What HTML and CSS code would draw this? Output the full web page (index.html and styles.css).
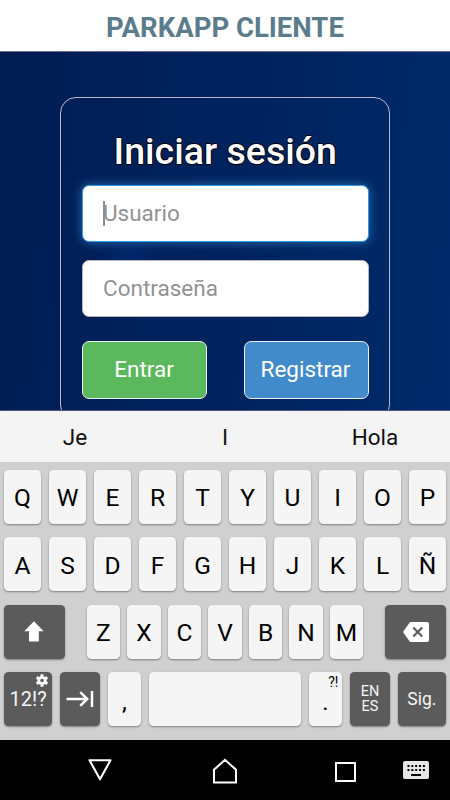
FILE: index.html
```
<!DOCTYPE html>
<html lang="es">
<head>
    <meta charset="UTF-8">
    <meta name="viewport" content="width=device-width, initial-scale=1.0">
    <title>ParkApp Cliente</title>
    <link rel="stylesheet" href="styles.css">
</head>
<body>
<header class="header">PARKAPP CLIENTE</header>

<main class="content">
    <form class="login">
        <h1>Iniciar sesión</h1>
        <div class="field focus"><span class="caret"></span>Usuario</div>
        <div class="field">Contraseña</div>
        <div class="buttons">
            <button type="button" class="btn btn-success">Entrar</button>
            <button type="button" class="btn btn-primary">Registrar</button>
        </div>
    </form>
</main>

<div class="suggestions">
    <span>Je</span>
    <span>I</span>
    <span>Hola</span>
</div>

<div class="keyboard">
    <div class="row">
        <div class="key">Q</div>
        <div class="key">W</div>
        <div class="key">E</div>
        <div class="key">R</div>
        <div class="key">T</div>
        <div class="key">Y</div>
        <div class="key">U</div>
        <div class="key">I</div>
        <div class="key">O</div>
        <div class="key">P</div>
    </div>
    <div class="row">
        <div class="key">A</div>
        <div class="key">S</div>
        <div class="key">D</div>
        <div class="key">F</div>
        <div class="key">G</div>
        <div class="key">H</div>
        <div class="key">J</div>
        <div class="key">K</div>
        <div class="key">L</div>
        <div class="key">Ñ</div>
    </div>
    <div class="row row-shift">
        <div class="key dark wide">
            <svg width="20" height="21" viewBox="0 0 20 21"><path d="M10 0.3 L19.6 10.3 H14.8 V20.5 H5 V10.3 H0.2 Z" fill="#fff"/></svg>
        </div>
        <div class="letters">
            <div class="key">Z</div>
            <div class="key">X</div>
            <div class="key">C</div>
            <div class="key">V</div>
            <div class="key">B</div>
            <div class="key">N</div>
            <div class="key">M</div>
        </div>
        <div class="key dark wide">
            <svg width="26" height="20" viewBox="0 0 26 20"><path d="M8.2 0 H24 Q26 0 26 2 V18 Q26 20 24 20 H8.2 Q7 20 6.3 19 L0.5 10.7 Q0 10 0.5 9.3 L6.3 1 Q7 0 8.2 0 Z" fill="#fff"/><path d="M10.2 5.5 L19.2 14.5 M19.2 5.5 L10.2 14.5" stroke="#5b5b5b" stroke-width="2.2"/></svg>
        </div>
    </div>
    <div class="row">
        <div class="key dark symbols">12!?
            <svg class="gear" width="12" height="13" viewBox="0 0 12 13"><circle cx="6" cy="6.5" r="3.2" fill="none" stroke="#fff" stroke-width="2.8"/><path d="M6 0.3 V2.5 M6 10.5 V12.7 M0.7 3.4 L2.5 4.5 M9.5 8.5 L11.3 9.6 M11.3 3.4 L9.5 4.5 M2.5 8.5 L0.7 9.6" stroke="#fff" stroke-width="3"/></svg>
        </div>
        <div class="key dark tab">
            <svg width="28" height="16" viewBox="0 0 28 16"><path d="M0.5 8 H21 M14.3 1.2 L21.2 8 L14.3 14.8 M26 0 V16" fill="none" stroke="#fff" stroke-width="2.5"/></svg>
        </div>
        <div class="key punct">,</div>
        <div class="key space"></div>
        <div class="key punct">.<span class="hint">?!</span></div>
        <div class="key dark lang"><span>EN</span><span>ES</span></div>
        <div class="key dark next">Sig.</div>
    </div>
</div>

<nav class="navbar">
    <svg class="back" width="24" height="22" viewBox="0 0 24 22"><path d="M1.5 1.2 H22.5 L12 20.3 Z" fill="none" stroke="#fff" stroke-width="2.1" stroke-linejoin="round"/></svg>
    <svg class="home" width="26" height="26" viewBox="0 0 26 26"><path d="M2 24.5 V11.8 L13 1.8 L24 11.8 V24.5 Z" fill="none" stroke="#fff" stroke-width="2"/></svg>
    <svg class="recent" width="21" height="20" viewBox="0 0 21 20"><rect x="1" y="1" width="19" height="18" fill="none" stroke="#fff" stroke-width="2"/></svg>
    <svg class="ime" width="26" height="18" viewBox="0 0 26 18"><rect width="26" height="18" rx="2" fill="#e6e6e6"/><path d="M4.5 5 H22 M4.5 9 H22" stroke="#000" stroke-width="2" stroke-dasharray="2 1.85"/><path d="M8 14 H18" stroke="#000" stroke-width="2"/></svg>
</nav>
</body>
</html>
```
FILE: styles.css
```
* {
    box-sizing: border-box;
}

body {
    margin: 0;
    width: 450px;
    height: 800px;
    overflow: hidden;
    font-family: Roboto, "Liberation Sans", sans-serif;
}

.header {
    height: 51px;
    padding-top: 1px;
    line-height: 53px;
    text-align: center;
    font-size: 27.5px;
    font-weight: 700;
    color: #5b7c8b;
    background-color: #fff;
}

.content {
    height: 360px;
    padding: 45px 60px 0;
    overflow: hidden;
    border-top: 1px solid #6c6c92;
    border-bottom: 1px solid #55527c;
    background: radial-gradient(circle at 130px 207px, rgba(0, 51, 140, 0.4), rgba(0, 51, 140, 0) 30px),
                linear-gradient(97deg, #001d52 0%, #00205a 30%, #002460 60%, #002b6b 100%);
}

.login {
    width: 330px;
    height: 324px;
    padding: 31px 20.5px 0 21px;
    border: 1px solid #bdb9c6;
    border-radius: 16px;
}

.login h1 {
    margin: 0 0 11px;
    height: 45px;
    line-height: 45px;
    text-align: center;
    font-size: 37.5px;
    font-weight: 500;
    color: #fff;
    text-shadow: 1px 0 0 #000, -1px 0 0 #000, 0 1px 0 #000, 0 -1px 0 #000;
}

.field {
    position: relative;
    height: 57px;
    margin-bottom: 18px;
    padding-left: 20px;
    line-height: 54px;
    font-size: 22.5px;
    color: #929292;
    background-color: #fff;
    border: 1px solid #b9b5b5;
    border-radius: 7px;
}

.field.focus {
    border-color: #2d9be6;
    box-shadow: 0 0 11px rgba(70, 160, 235, 0.6);
}

.caret {
    position: absolute;
    left: 20px;
    top: 15px;
    width: 1.5px;
    height: 25px;
    background-color: #8d8d8d;
}

.buttons {
    display: flex;
    justify-content: space-between;
    padding-top: 6px;
}

.btn {
    width: 125px;
    height: 58px;
    padding: 0 1px 2px 0;
    font-family: inherit;
    font-size: 22.5px;
    color: #fff;
    border: 1px solid #eee;
    border-radius: 7px;
}

.btn-success {
    background-color: #5cb85c;
}

.btn-primary {
    background-color: #428bca;
}

.suggestions {
    display: flex;
    height: 51px;
    line-height: 52px;
    text-align: center;
    font-size: 22.5px;
    color: #111;
    background-color: #f4f4f4;
}

.suggestions span {
    flex: 1;
}

.keyboard {
    display: flex;
    flex-direction: column;
    gap: 13.5px;
    height: 278px;
    padding: 7.5px 3.75px 0;
    background-color: #d0d0d0;
}

.row {
    display: flex;
    gap: 7.5px;
}

.row-shift {
    justify-content: space-between;
}

.letters {
    display: flex;
    gap: 7.1px;
    width: 276.5px;
}

.key {
    position: relative;
    display: flex;
    flex: 1;
    align-items: center;
    justify-content: center;
    height: 54px;
    padding-top: 2px;
    font-size: 24.5px;
    color: #000;
    background-color: #f5f5f5;
    border-radius: 4.5px;
    box-shadow: 0 1px 2px rgba(0, 0, 0, 0.4);
}

.key.dark {
    padding-top: 0;
    color: #f5f5f5;
    background-color: #5b5b5b;
}

.key.wide {
    flex: 0 0 61.3px;
}

.key.symbols {
    flex: 0 0 48.7px;
    font-size: 20px;
}

.key.tab {
    flex: 0 0 40.2px;
}

.key.punct {
    flex: 0 0 33.7px;
    padding-top: 5px;
}

.key.lang {
    flex: 0 0 40.2px;
    flex-direction: column;
    font-size: 14.5px;
    line-height: 15px;
}

.key.next {
    flex: 0 0 48.7px;
    font-size: 17.5px;
}

.gear {
    position: absolute;
    top: 2px;
    right: 4px;
}

.hint {
    position: absolute;
    top: 2px;
    right: 4px;
    font-size: 14px;
    line-height: 16px;
}

.navbar {
    display: flex;
    align-items: center;
    height: 60px;
    padding-left: 88px;
    background-color: #000;
}

.home {
    margin: 2px 0 0 100px;
}

.recent {
    margin: 4px 0 0 97px;
}

.ime {
    margin-left: 47px;
}
```
